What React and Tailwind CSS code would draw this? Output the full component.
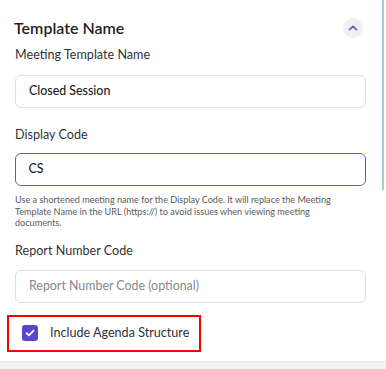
import React from "react";

export default function App() {
  return (
    <div className="relative w-[386px] h-[369px] bg-white flex flex-col overflow-hidden" style={{ fontFamily: "Lato, 'Noto Sans', sans-serif" }}>
      <div className="flex-1 pl-[15px] pr-[20px] pt-[18px]">
        <div className="flex items-center justify-between h-[20px]">
          <h2 className="text-[16px] leading-[20px] font-semibold text-[#1f1f1f] -ml-px">Template Name</h2>
          <button className="w-[20px] h-[20px] rounded-full bg-[#f0eff4] flex items-center justify-center mr-[3px]">
            <svg width="10" height="6" viewBox="0 0 10 6" fill="none">
              <path d="M1.5 4.6 L5 1.4 L8.5 4.6" stroke="#6a4fd8" strokeWidth="1.7" strokeLinecap="round" strokeLinejoin="round" />
            </svg>
          </button>
        </div>

        <label className="block mt-[7px] text-[12.6px] leading-[20px] text-[#333]">Meeting Template Name</label>
        <div className="mt-[10px] h-[33px] w-[351px] rounded-[6px] border border-[#dedede] flex items-center pl-[13px] text-[12.4px] font-medium text-[#222]">
          Closed Session
        </div>

        <label className="block mt-[17px] text-[12.6px] leading-[20px] text-[#333]">Display Code</label>
        <div className="mt-[8px] h-[33px] w-[351px] rounded-[6px] border-[1.5px] border-[#6b52d6] flex items-center pl-[12.5px] text-[12.4px] font-medium text-[#222]">
          CS
        </div>
        <p className="mt-[8px] text-[9.1px] leading-[11.5px] text-[#5a5a5a] w-[340px]">
          Use a shortened meeting name for the Display Code. It will replace the Meeting Template Name in the URL (https://) to avoid issues when viewing meeting documents.
        </p>

        <label className="block mt-[12px] text-[12.6px] leading-[20px] text-[#333]">Report Number Code</label>
        <div className="mt-[9px] h-[33px] w-[351px] rounded-[6px] border border-[#dedede] flex items-center pl-[13px] text-[12.4px] text-[#888]">
          Report Number Code (optional)
        </div>

        <div className="mt-[12px] -ml-[8px] w-[194px] h-[37px] border-2 border-[#ff0000] flex items-center pl-[13px]">
          <span className="w-[16px] h-[16px] rounded-[3px] bg-[#5c44cc] flex items-center justify-center">
            <svg width="10" height="8" viewBox="0 0 10 8" fill="none">
              <path d="M1.5 4.2 L3.9 6.4 L8.5 1.6" stroke="white" strokeWidth="1.8" strokeLinecap="round" strokeLinejoin="round" />
            </svg>
          </span>
          <span className="ml-[12px] text-[12.6px] whitespace-nowrap text-[#333]">Include Agenda Structure</span>
        </div>
      </div>
      <div className="h-[8px] bg-[#f4f4f4] border-t-2 border-[#eeeeee]" />
      <div className="absolute right-[2px] top-0 w-[2px] h-[190px] bg-[#a9cbcd]" />
    </div>
  );
}
